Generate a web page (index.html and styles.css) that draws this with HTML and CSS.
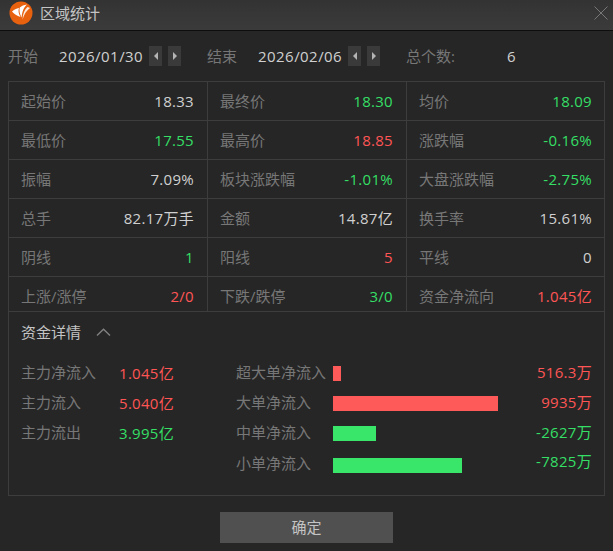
FILE: index.html
```html
<!DOCTYPE html>
<html lang="zh">
<head>
<meta charset="utf-8">
<title>区域统计</title>
<link rel="stylesheet" href="styles.css">
</head>
<body>
<div class="dialog">
  <header class="titlebar">
    <svg class="logo" width="24" height="24" viewBox="0 0 24 24">
      <circle cx="12" cy="12" r="11.5" fill="#e8610f"/>
      <path d="M3 10.5 C5 8.5 7.5 7.6 10 7 C9 9.5 9.5 12.5 11.5 16 C8 15 5 13 3 10.5 Z" fill="#fff"/>
      <path d="M10.8 6.6 C12.5 5 15 3.8 18 3.5 C15 6 13.2 10 12.6 16.5 C10.6 13 10 9.5 10.8 6.6 Z" fill="#fff"/>
      <path d="M18.5 6 C19.5 6.2 20.3 6.6 21 7 C17.5 9.5 15 13.5 13.6 18.5 C13.6 13 15.5 8.5 18.5 6 Z" fill="#fde9da"/>
    </svg>
    <span class="title">区域统计</span>
    <svg class="close" width="14" height="14" viewBox="0 0 14 14">
      <path d="M0.5 0.5 L13.5 13.5 M13.5 0.5 L0.5 13.5" stroke="#777" stroke-width="1" fill="none"/>
    </svg>
  </header>

  <div class="filters">
    <span class="f-label f-start">开始</span>
    <span class="f-date">2026/01/30</span>
    <span class="stepper">
      <button class="step"><svg width="4" height="8" viewBox="0 0 4 8"><path d="M4 0 V8 L0 4 Z" fill="#b4b4b4"/></svg></button>
      <button class="step"><svg width="4" height="8" viewBox="0 0 4 8"><path d="M0 0 V8 L4 4 Z" fill="#b4b4b4"/></svg></button>
    </span>
    <span class="f-label f-end">结束</span>
    <span class="f-date">2026/02/06</span>
    <span class="stepper">
      <button class="step"><svg width="4" height="8" viewBox="0 0 4 8"><path d="M4 0 V8 L0 4 Z" fill="#b4b4b4"/></svg></button>
      <button class="step"><svg width="4" height="8" viewBox="0 0 4 8"><path d="M0 0 V8 L4 4 Z" fill="#b4b4b4"/></svg></button>
    </span>
    <span class="f-label f-total">总个数:</span>
    <span class="f-count">6</span>
  </div>

  <section class="panel">
    <div class="grid">
      <div class="cell"><span class="k">起始价</span><span class="v">18.33</span></div>
      <div class="cell"><span class="k">最终价</span><span class="v down">18.30</span></div>
      <div class="cell"><span class="k">均价</span><span class="v down">18.09</span></div>
      <div class="cell"><span class="k">最低价</span><span class="v down">17.55</span></div>
      <div class="cell"><span class="k">最高价</span><span class="v up">18.85</span></div>
      <div class="cell"><span class="k">涨跌幅</span><span class="v down">-0.16%</span></div>
      <div class="cell"><span class="k">振幅</span><span class="v">7.09%</span></div>
      <div class="cell"><span class="k">板块涨跌幅</span><span class="v down">-1.01%</span></div>
      <div class="cell"><span class="k">大盘涨跌幅</span><span class="v down">-2.75%</span></div>
      <div class="cell"><span class="k">总手</span><span class="v">82.17万手</span></div>
      <div class="cell"><span class="k">金额</span><span class="v">14.87亿</span></div>
      <div class="cell"><span class="k">换手率</span><span class="v">15.61%</span></div>
      <div class="cell"><span class="k">阴线</span><span class="v down">1</span></div>
      <div class="cell"><span class="k">阳线</span><span class="v up">5</span></div>
      <div class="cell"><span class="k">平线</span><span class="v">0</span></div>
      <div class="cell short"><span class="k">上涨/涨停</span><span class="v up">2/0</span></div>
      <div class="cell short"><span class="k">下跌/跌停</span><span class="v down">3/0</span></div>
      <div class="cell short"><span class="k">资金净流向</span><span class="v up">1.045亿</span></div>
    </div>

    <div class="detail">
      <div class="detail-head">
        <span class="detail-title">资金详情</span>
        <svg width="15" height="8" viewBox="0 0 15 8"><path d="M1 7.5 L7.5 1.2 L14 7.5" stroke="#808080" stroke-width="1.4" fill="none"/></svg>
      </div>
      <div class="detail-body">
        <div class="summary">
          <div class="s-row"><span class="k">主力净流入</span><span class="s-val up">1.045亿</span></div>
          <div class="s-row"><span class="k">主力流入</span><span class="s-val up">5.040亿</span></div>
          <div class="s-row"><span class="k">主力流出</span><span class="s-val down">3.995亿</span></div>
        </div>
        <div class="flows">
          <div class="f-row"><span class="k f-name">超大单净流入</span><span class="track"><span class="bar bar-up" style="width:8px"></span></span><span class="v up">516.3万</span></div>
          <div class="f-row"><span class="k f-name">大单净流入</span><span class="track"><span class="bar bar-up" style="width:165px"></span></span><span class="v up">9935万</span></div>
          <div class="f-row"><span class="k f-name">中单净流入</span><span class="track"><span class="bar bar-down" style="width:43px"></span></span><span class="v down">-2627万</span></div>
          <div class="f-row f-last"><span class="k f-name">小单净流入</span><span class="track"><span class="bar bar-down" style="width:129px"></span></span><span class="v down">-7825万</span></div>
        </div>
      </div>
    </div>
  </section>

  <div class="actions"><button class="ok">确定</button></div>
</div>
</body>
</html>
```
FILE: styles.css
```css
* { box-sizing: border-box; }
html, body { margin: 0; padding: 0; }
body {
  width: 613px;
  height: 551px;
  overflow: hidden;
  background: #262626;
  font-family: "Open Sans", "Noto Sans CJK SC", sans-serif;
  font-size: 15px;
  color: #d0d0d0;
}
.dialog { display: flex; flex-direction: column; height: 551px; }

.titlebar {
  height: 31px;
  display: flex;
  align-items: center;
  padding: 0 5px 5px 9px;
  background: linear-gradient(#333333, #3b3b3b);
  border-bottom: 1px solid #0d0d0d;
}
.logo { flex: none; }
.title { margin-left: 7px; font-size: 15px; line-height: 24px; color: #c4c4c4; }
.close { margin-left: auto; margin-right: 0; }

.filters {
  height: 50px;
  display: flex;
  align-items: center;
  padding: 0 0 0 8px;
}
.f-label { color: #777; line-height: 20px; }
.f-date { margin-left: 21px; width: 90px; line-height: 20px; letter-spacing: 0.45px; }
.f-end { margin-left: 26px; }
.f-total { margin-left: 26px; }
.f-count { margin-left: 52px; line-height: 20px; }
.stepper { display: flex; gap: 6px; }
.step {
  width: 13px;
  height: 20px;
  padding: 0;
  border: 0;
  background: #3a3a3a;
  display: flex;
  align-items: center;
  justify-content: center;
}

.panel {
  margin: 0 8px 0 8px;
  height: 415px;
  border: 1px solid #3d3d3d;
}
.grid { display: grid; grid-template-columns: 199px 199px 197px; }
.cell {
  height: 39px;
  display: flex;
  align-items: center;
  justify-content: space-between;
  padding: 0 13px 0 12px;
  line-height: 20px;
  border-right: 1px solid #3d3d3d;
  border-bottom: 1px solid #3d3d3d;
}
.cell:nth-child(3n) { border-right: 0; padding-right: 12px; }
.cell.short { height: 35px; padding-top: 4px; }
.k { color: #777; line-height: 20px; }
.v { line-height: 20px; letter-spacing: 0.3px; }
.s-val { letter-spacing: 0.3px; }
.up { color: #ff5555; }
.down { color: #35df65; }

.detail { padding: 0 12px; }
.detail-head {
  height: 42px;
  display: flex;
  align-items: center;
  gap: 15px;
  padding-bottom: 2px;
}
.detail-title { color: #c4c4c4; line-height: 20px; }

.detail-body { display: flex; padding-top: 4px; }
.summary { width: 215px; flex: none; }
.s-row { height: 30px; display: flex; align-items: center; padding-bottom: 2px; }
.s-row .k { width: 98px; }
.flows { flex: 1; }
.f-row { height: 30px; display: flex; align-items: center; }
.f-row .k, .f-row .v { position: relative; top: -1px; }
.f-last { height: 32px; padding-top: 2px; }
.f-last .k { top: -2px; }
.f-last .v { top: -4px; }
.f-name { width: 97px; flex: none; }
.track { flex: 1; display: flex; }
.bar { display: block; height: 15px; }
.bar-up { background: #ff5a5a; }
.bar-down { background: #3ae66a; }

.actions { padding: 16px 0 0 220px; }
.ok {
  width: 173px;
  height: 31px;
  border: 0;
  padding: 0 0 1px;
  background: #505050;
  color: #c4c4c4;
  font: inherit;
  line-height: 20px;
}
```
